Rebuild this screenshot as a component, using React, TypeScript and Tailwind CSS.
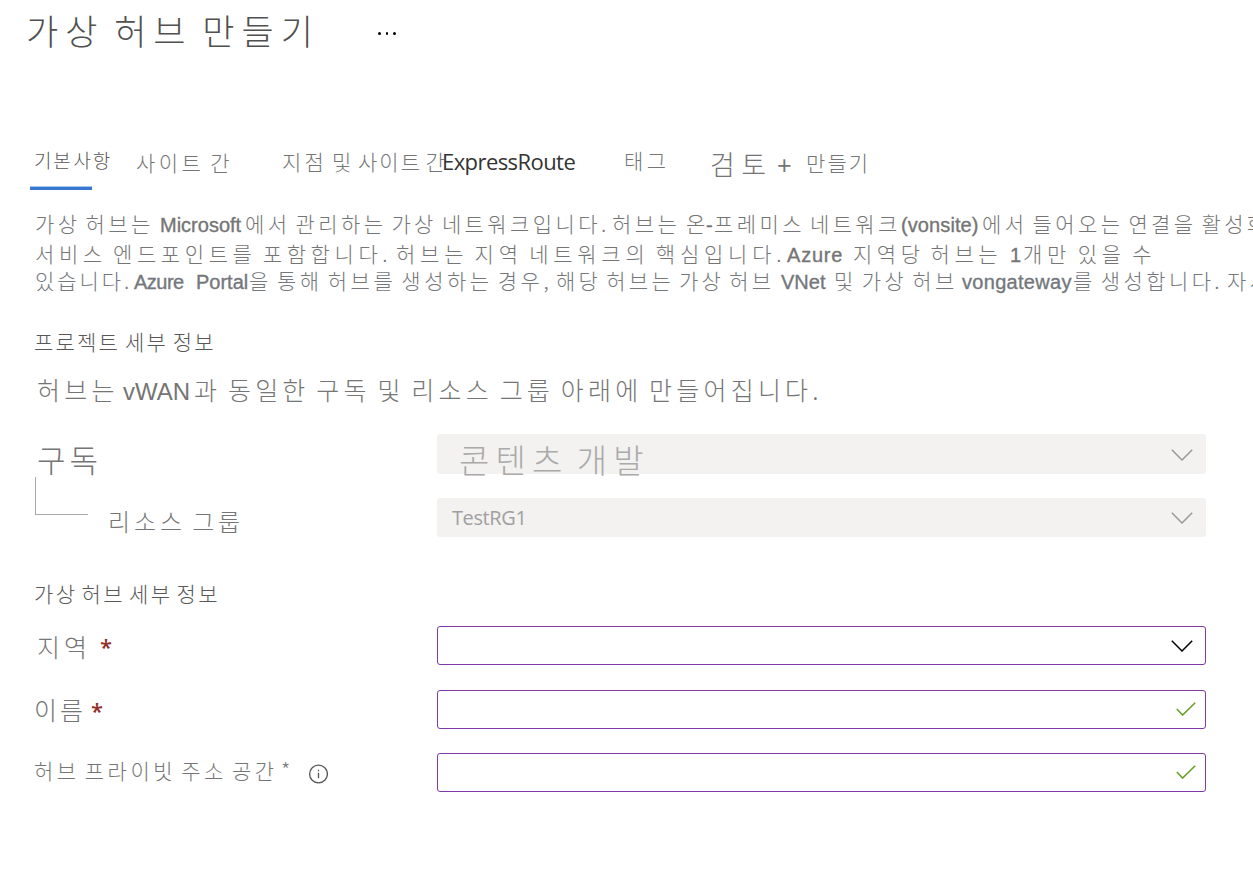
import type { ReactNode } from "react";

function Run({ className, children }: { className: string; children: ReactNode }) {
  return <span className={`block shrink-0 whitespace-pre ${className}`}>{children}</span>;
}

const latin =
  "font-['Liberation_Sans',sans-serif] text-[20px] [word-spacing:0] [-webkit-text-stroke:0.35px_currentColor]";

function Chevron({ className }: { className: string }) {
  return (
    <svg width="22" height="12" viewBox="0 0 22 12" fill="none" className={className}>
      <path d="M0.8 0.8 L11 11 L21.2 0.8" stroke="currentColor" strokeWidth="1.5" />
    </svg>
  );
}

function Check() {
  return (
    <svg width="20" height="14" viewBox="0 0 20 14" fill="none" className="mr-[9px] mb-[1px] text-[#67a025]">
      <path d="M0.8 7 L6.6 13 L19.2 0.8" stroke="currentColor" strokeWidth="1.6" />
    </svg>
  );
}

function Field({ className, children }: { className: string; children: ReactNode }) {
  return (
    <div className={`flex w-[769px] shrink-0 items-center rounded-[3px] ${className}`}>{children}</div>
  );
}

export default function App() {
  return (
    <main className="flex h-[872px] w-[1253px] flex-col overflow-hidden bg-white font-['Noto_Sans_CJK_KR',sans-serif] font-light text-[#757575]">
      <header className="flex h-[62px] shrink-0 pl-[26px] text-[#505050]">
        <Run className="w-[352px] text-[35px] leading-[60px] tracking-[7px] [word-spacing:-5px]">
          가상 허브 만들기
        </Run>
        <div className="flex gap-[5px] pt-[32px]">
          <i className="size-[2.5px] rounded-full bg-black" />
          <i className="size-[2.5px] rounded-full bg-black" />
          <i className="size-[2.5px] rounded-full bg-black" />
        </div>
      </header>

      <nav className="mt-[84px] flex h-[44px] shrink-0 pl-[30px] text-[21px] leading-[30px]">
        <div className="flex w-[105px] flex-col">
          <Run className="-mt-px h-[41px] pl-[4px] text-[19px] tracking-[1.8px] text-[#585858] [word-spacing:-5px]">
            기본 사항
          </Run>
          <div className="h-[4px] w-[62px] border-t border-[#a5c8ea] bg-[#3878d0]" />
        </div>
        <Run className="w-[147px] pt-px pl-[1px] tracking-[3.4px] [word-spacing:-2px]">사이트 간</Run>
        <Run className="w-[76px] tracking-[3.2px] [word-spacing:-3px]">지점 및</Run>
        <Run className="w-[84px] tracking-[2px] [word-spacing:-3px]">사이트 간</Run>
        <Run className="w-[182px] font-['Open_Sans',sans-serif] text-[22px] font-normal tracking-[-0.57px] text-[#333]">
          ExpressRoute
        </Run>
        <Run className="-mt-px w-[86px] tracking-[3.4px]">태그</Run>
        <Run className="w-[67px] pt-[3px] text-[27px] tracking-[6.5px]">검토</Run>
        <Run className="w-[29px] pt-[4px] font-['Liberation_Sans',sans-serif] text-[25px]">+</Run>
        <Run className="pt-px tracking-[2.1px]">만들기</Run>
      </nav>

      <section className="mt-[18px] flex h-[90px] shrink-0 flex-col pl-[35px] text-[21px] tracking-[3.4px] [word-spacing:-3px]">
        <div className="flex h-[30px] items-baseline leading-[30px]">
          <Run className="w-[125px]">가상 허브는</Run>
          <Run className={`w-[85px] tracking-[0px] ${latin}`}>Microsoft</Run>
          <Run className="w-[367px] tracking-[3.4px]">에서 관리하는 가상 네트워크입니다.</Run>
          <Run className="w-[74px]">허브는</Run>
          <Run className="w-[20px]">온</Run>
          <Run className={`w-[8px] tracking-[0px] ${latin}`}>-</Run>
          <Run className="w-[187px]">프레미스 네트워크</Run>
          <Run className={`w-[81px] tracking-[0.1px] ${latin}`}>(vonsite)</Run>
          <Run className="">에서 들어오는 연결을 활성화</Run>
        </div>
        <div className="flex h-[29px] items-baseline leading-[30px]">
          <Run className="w-[361px] tracking-[4.6px]">서비스 엔드포인트를 포함합니다.</Run>
          <Run className="w-[391px] tracking-[4.75px]">허브는 지역 네트워크의 핵심입니다.</Run>
          <Run className={`w-[66px] tracking-[0.8px] ${latin}`}>Azure</Run>
          <Run className="w-[157px] tracking-[4.5px]">지역당 허브는</Run>
          <Run className={`w-[13px] tracking-[0px] ${latin}`}>1</Run>
          <Run className="tracking-[4.8px]">개만 있을 수</Run>
        </div>
        <div className="flex h-[30px] items-baseline leading-[26px] text-[#74777c]">
          <Run className="w-[99px] tracking-[2.9px]">있습니다.</Run>
          <Run className={`w-[62px] tracking-[-0.5px] ${latin}`}>Azure</Run>
          <Run className={`w-[53px] tracking-[0px] ${latin}`}>Portal</Run>
          <Run className="w-[307px] tracking-[3.5px]">을 통해 허브를 생성하는 경우,</Run>
          <Run className="w-[225px] tracking-[3.3px]">해당 허브는 가상 허브</Run>
          <Run className={`w-[53px] tracking-[0px] ${latin}`}>VNet</Run>
          <Run className="w-[128px]">및 가상 허브</Run>
          <Run className={`w-[111px] tracking-[0.3px] ${latin}`}>vongateway</Run>
          <Run className="w-[154px] tracking-[3.4px]">를 생성합니다.</Run>
          <Run className="">자세히</Run>
        </div>
      </section>

      <section className="flex h-[116px] shrink-0 flex-col">
        <Run className="mt-[28px] h-[30px] pl-[34px] text-[21px] leading-[30px] tracking-[2.2px] text-[#585858] [word-spacing:-2px]">
          프로젝트 세부 정보
        </Run>
        <div className="mt-[18px] flex items-baseline pl-[37px] text-[25px] leading-[30px] tracking-[4.2px] [word-spacing:-3px]">
          <Run className="w-[86px]">허브는</Run>
          <Run className="w-[71px] font-['Liberation_Sans',sans-serif] text-[24px] font-normal tracking-normal">
            vWAN
          </Run>
          <Run className="">과 동일한 구독 및 리소스 그룹 아래에 만들어집니다.</Run>
        </div>
      </section>

      <section className="mt-[20px] flex h-[103px] shrink-0 pl-[35px]">
        <div className="flex w-[402px] flex-col">
          <Run className="h-[43px] pt-[5px] pl-[2px] text-[31px] leading-[40px] tracking-[4px]">구독</Run>
          <div className="flex h-[60px]">
            <div className="h-[38px] w-[53px] border-b border-l border-[#a9a9a9]" />
            <Run className="pt-[29px] pl-[20px] text-[24px] leading-[30px] tracking-[3.9px] [word-spacing:-3px]">
              리소스 그룹
            </Run>
          </div>
        </div>
        <div className="flex flex-col gap-6">
          <Field className="h-[40px] bg-[#f3f2f1]">
            <Run className="flex-1 pt-[9px] pl-[22px] text-[33px] leading-[40px] tracking-[6.1px] text-[#aaa] [word-spacing:-5px]">
              콘텐츠 개발
            </Run>
            <Chevron className="mt-[2px] mr-[13.5px] text-[#999]" />
          </Field>
          <Field className="h-[39px] bg-[#f3f2f1]">
            <Run className="flex-1 pl-[15px] font-['Open_Sans',sans-serif] text-[20px] font-normal leading-[41px] tracking-[-0.4px] text-[#a0a0a0]">
              TestRG1
            </Run>
            <Chevron className="mt-px mr-[13.5px] text-[#999]" />
          </Field>
        </div>
      </section>

      <Run className="mt-[41px] h-[48px] pl-[34px] text-[21px] leading-[30px] tracking-[2.4px] text-[#585858] [word-spacing:-3px]">
        가상 허브 세부 정보
      </Run>

      <section className="flex h-[166px] shrink-0 pl-[35px]">
        <div className="flex w-[402px] flex-col text-[25px]">
          <div className="flex h-[64px] pt-[5px] leading-[30px]">
            <Run className="w-[65px] pl-[2px] tracking-[4px]">지역</Run>
            <Run className="font-['Open_Sans',sans-serif] text-[22px] font-semibold text-[#912f2b]">*</Run>
          </div>
          <div className="flex h-[64px] pt-[4px] leading-[30px]">
            <Run className="-ml-px w-[57px] tracking-[3px]">이름</Run>
            <Run className="pt-px font-['Open_Sans',sans-serif] text-[22px] font-semibold text-[#912f2b]">*</Run>
          </div>
          <div className="flex h-[38px] pt-px text-[21px] leading-[30px]">
            <Run className="-ml-px w-[247px] tracking-[3.5px] [word-spacing:-3px]">허브 프라이빗 주소 공간</Run>
            <Run className="w-[27px]">*</Run>
            <svg width="20" height="20" viewBox="0 0 20 20" fill="none" className="mt-[9px] text-[#555]">
              <circle cx="10.5" cy="10" r="8.9" stroke="currentColor" strokeWidth="1.3" />
              <path d="M10.5 8.7 V14.3 M10.5 5.7 V7.2" stroke="currentColor" strokeWidth="1.3" />
            </svg>
          </div>
        </div>
        <div className="flex flex-col">
          <Field className="mb-[25px] h-[39px] border border-[#7f3aa7]">
            <span className="flex-1" />
            <Chevron className="mt-px mr-[12.5px] text-black" />
          </Field>
          <Field className="mb-[24px] h-[39px] border border-[#7f3aa7]">
            <span className="flex-1" />
            <Check />
          </Field>
          <Field className="h-[39px] border border-[#7f3aa7]">
            <span className="flex-1" />
            <Check />
          </Field>
        </div>
      </section>
    </main>
  );
}
